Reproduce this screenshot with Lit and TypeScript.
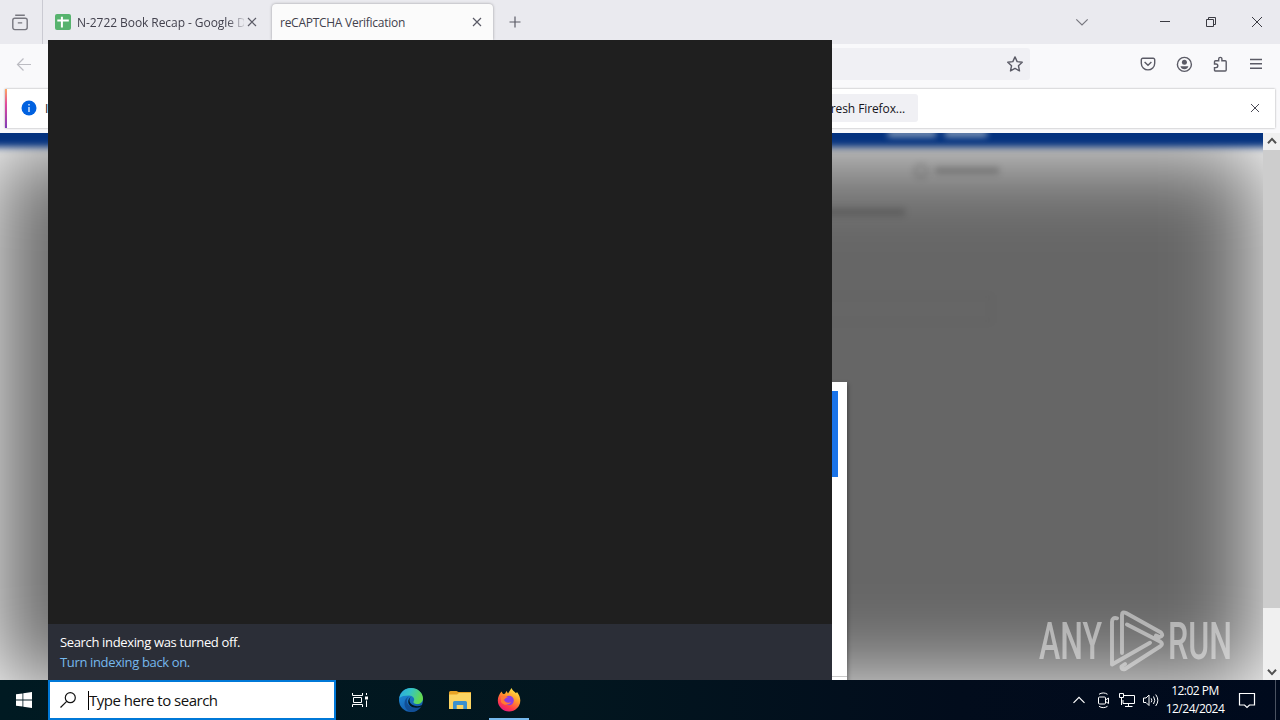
import { LitElement, html, css, svg } from 'lit';
import { customElement, property } from 'lit/decorators.js';

const paths: Record<string, unknown> = {
  view: svg`<path d="M3.2 .3h9.6M5.8 7.9h4.4"/><rect x=".8" y="3.2" width="14.4" height="11.4" rx="2"/>`,
  close: svg`<path d="M4 4l8 8M12 4l-8 8"/>`,
  bigclose: svg`<path d="M3 3l10 10M13 3L3 13"/>`,
  plus: svg`<path d="M8 2.5v11M2.5 8h11"/>`,
  chevron: svg`<path d="M2.3 5.3L8 11l5.7-5.7"/>`,
  min: svg`<path d="M3 7.5h10"/>`,
  restore: svg`<path d="M3.5 5.5h7v7h-7zM5.5 5.5v-2h7v7h-2"/>`,
  back: svg`<path d="M15 8.5H1.5M7.5 2.5l-6 6 6 6"/>`,
  star: svg`<path d="M8 .9l2.15 4.75 5.1.6-3.8 3.5 1.05 5.15L8 12.4l-4.5 2.5 1.05-5.15-3.8-3.5 5.1-.6z" stroke-linejoin="round"/>`,
  pocket: svg`<path d="M2.8 2.3h10.4a1.5 1.5 0 0 1 1.5 1.5v3.4a6.7 6.7 0 0 1-13.4 0V3.8a1.5 1.5 0 0 1 1.5-1.5zM4.6 6l3.4 3.2L11.4 6"/>`,
  account: svg`<circle cx="8.4" cy="8.4" r="7"/><circle cx="8.4" cy="6.2" r="2.5" fill="currentColor" stroke="none"/><path d="M4.4 10.2h8c-.5 2-2 3-4 3s-3.5-1-4-3z" fill="currentColor" stroke="none"/>`,
  puzzle: svg`<path d="M2.5 7.3V5.8a1 1 0 0 1 1-1h3.2V3a1.6 1.6 0 0 1 3.2 0v1.8h3.3a1 1 0 0 1 1 1v8.2a1 1 0 0 1-1 1H3.5a1 1 0 0 1-1-1v-2.4h1.5a1.7 1.7 0 0 0 0-3.6H2.5z"/>`,
  menu: svg`<path d="M2 3.5h12M2 7.7h12M2 12.2h12"/>`,
  up: svg`<path d="M4 9.7l4-4.3 4 4.3"/>`,
  down: svg`<path d="M4 6.3l4 4.3 4-4.3"/>`,
  info: svg`<circle cx="8" cy="8" r="7.5" fill="#0061e0" stroke="none"/><path d="M8 7v5M8 4v1.5" stroke="#fff"/>`,
  sheets: svg`<rect width="16" height="16" rx="2" fill="#57b36e" stroke="none"/><path d="M6.9 2.7v10.8M2.3 6.5h11.5" stroke="#fff" stroke-width="2"/>`,
  start: svg`<path d="M0 2.3l6.5-.9v6.2H0zM7.3 1.3L16 0v7.6H7.3zM0 8.4h6.5v6.2L0 13.7zM7.3 8.4H16V16l-8.7-1.2z" fill="#fff" stroke="none"/>`,
  search: svg`<circle cx="10.3" cy="5.7" r="5"/><path d="M6.7 9.3L.5 15.5"/>`,
  taskview: svg`<path d="M.5 1v2.5h10V1M.5 15v-2.5h10V15M1.5 5.5h8v5h-8zM14.5 1v2M14.5 8.5V15"/><path d="M13 4.5h3v3h-3z" fill="#fff" stroke="none"/>`,
  tray: svg`<path d="M2.5 10.8L8 5.3l5.5 5.5"/>`,
  camera: svg`<rect x="3.5" y="5" width="7" height="7" rx="1"/><path d="M10.5 8l3-2v5.5l-3-2M4 2.3c2.5-1.8 6-1.8 8.5 0M4 14.3c2.5 1.8 6 1.8 8.5 0"/>`,
  network: svg`<path d="M5 3.5h10.5v8H4V8M9.5 11.5v3M6 14.5h7.5M.5 1.5h4v4h-4zM2.5 5.5v7.5"/>`,
  volume: svg`<path d="M.5 6v4.5H3l3 3V3L3 6zM8.2 6.3q1.3 2 0 4M10.5 4.5q2.6 3.8 0 7.5M12.7 2.5q4.3 5.7 0 11.5"/>`,
  notice: svg`<path d="M.5 1.5h15v11.5H10.5l-2.5 2.5-2.5-2.5H.5z"/>`,
};

@customElement('ui-icon')
export class UiIcon extends LitElement {
  static styles = css`
    :host { display: block; flex: none; width: 16px; height: 16px; }
    svg { display: block; width: 100%; height: 100%; overflow: visible; }
  `;

  @property() name = '';
  @property({ type: Number }) weight = 1.2;

  render() {
    return html`<svg viewBox="0 0 16 16" fill="none" stroke="currentColor" stroke-width=${this.weight}>${paths[this.name]}</svg>`;
  }
}

@customElement('browser-window')
export class BrowserWindow extends LitElement {
  static styles = css`
    :host { display: flex; flex-direction: column; height: 680px; background: #f9f9fb; color: #5b5b66; }
    .tabs { display: flex; height: 44px; background: #eaeaef; flex: none; }
    .view { border-right: 1px solid #cacad2; padding: 15px 0 0 12px; box-sizing: border-box; height: 44px; width: 43px; color: #77777f; }
    .tab { box-sizing: border-box; display: flex; align-items: center; height: 36px; margin-top: 4px; color: #42414d; font-size: 12px; }
    .first { width: 229px; padding: 0 12px; }
    .first .label { width: 167px; margin-left: 6px; letter-spacing: -0.06px; -webkit-mask-image: linear-gradient(90deg, #000 150px, transparent 170px); }
    .label { overflow: hidden; white-space: nowrap; line-height: 18px; padding-top: 2px; }
    .active { width: 221px; padding: 0 8px; background: #fbfbfb; border-radius: 4px 4px 0 0; box-shadow: 0 0 3px rgba(0, 0, 0, .35); justify-content: space-between; }
    .active .label { letter-spacing: -0.27px; }
    .tab ui-icon:last-child { color: #5b5b66; }
    .new { margin: 14px 0 0 14px; }
    .controls { display: flex; margin: 14px 15px 0 auto; gap: 30px; color: #3b3b42; }
    .all { margin-right: 37px; color: #77777f; }
    .nav { display: flex; height: 44px; align-items: center; flex: none; box-sizing: border-box; padding: 0 16px 4px; }
    .back { color: #bcbcc2; }
    .url { box-sizing: border-box; height: 32px; width: 830px; margin: 0 110px 0 168px; padding: 8px 7px; background: #f0f0f4; display: flex; justify-content: flex-end; border-radius: 0 3px 3px 0; }
    .tools { display: flex; gap: 20px; }
    .notice { box-sizing: border-box; display: flex; align-items: center; flex: none; height: 39px; margin: 1px 5px 5px; border-left: 2px solid; border-image: linear-gradient(#ffad5e, #e0489e 40%, #7b3cb8) 1; background: #fff; box-shadow: 0 0 2px rgba(0, 0, 0, .35); padding: 0 12px 1px 14px; font-size: 12px; color: #15141a; }
    .message { margin-left: 8px; width: 747px; }
    .refresh { width: 126px; height: 28px; box-sizing: border-box; padding-right: 13px; border-radius: 3px; background: #f0f0f4; text-align: right; line-height: 29px; letter-spacing: -0.1px; white-space: nowrap; }
    .dismiss { margin-left: auto; color: #4a4a55; }
    .body { display: flex; flex: 1; min-height: 0; }
    .page { position: relative; flex: 1; overflow: hidden; background: #fff; }
    .shade { position: absolute; inset: 17px 3px -6px -3px; background: rgba(0, 0, 0, .6); filter: blur(44px); }
    .banner { position: absolute; inset: -14px -12px auto -12px; height: 28px; background: #04327f; filter: blur(3.5px); }
    .ghost { position: absolute; filter: blur(3px); }
    .crumb { left: 888px; top: -3px; width: 48px; height: 7px; background: #7f97b8; }
    .crumb2 { left: 945px; width: 42px; }
    .dot { left: 914px; top: 31px; width: 10px; height: 10px; border: 2px solid rgba(0, 0, 0, .25); border-radius: 50%; }
    .line { left: 935px; top: 34px; width: 64px; height: 7px; background: rgba(0, 0, 0, .2); }
    .line2 { left: 820px; top: 75px; width: 85px; height: 8px; background: rgba(0, 0, 0, .15); }
    .field { left: 700px; top: 162px; width: 288px; height: 24px; border: 2px solid rgba(0, 0, 0, .035); }
    .dialog { position: absolute; right: 416px; top: 249px; width: 400px; height: 310px; box-sizing: border-box; background: #fff; padding: 9px; box-shadow: 1px 2px 4px rgba(0, 0, 0, .35); }
    .challenge { height: 86px; background: #1a73e8; }
    .rule { height: 1px; margin: 199px -9px 0; background: #c9c9c9; }
    .scroll { width: 17px; background: #f0f0f0; display: flex; flex-direction: column; color: #505050; }
    .scroll ui-icon { margin: 0 .5px; height: 17px; }
    .thumb { height: 458px; background: #cdcdcd; }
    .scroll ui-icon:last-child { margin-top: auto; }
    .mark { position: absolute; left: 1028px; top: 474px; width: 214px; height: 68px; opacity: .55; }
    .mark text { font-family: Roboto, "Liberation Sans", sans-serif; font-size: 52px; font-weight: 500; fill: #ececec; }
    .mark path { fill: none; stroke: #ececec; stroke-width: 3.9; stroke-linejoin: round; stroke-linecap: round; }
  `;

  render() {
    return html`
      <div class="tabs">
        <div class="view"><ui-icon name="view" weight="1.4"></ui-icon></div>
        <div class="tab first">
          <ui-icon name="sheets"></ui-icon>
          <span class="label">N-2722 Book Recap - Google Dr</span>
          <ui-icon name="close"></ui-icon>
        </div>
        <div class="tab active">
          <span class="label">reCAPTCHA Verification</span>
          <ui-icon name="close"></ui-icon>
        </div>
        <ui-icon class="new" name="plus"></ui-icon>
        <div class="controls">
          <ui-icon class="all" name="chevron"></ui-icon>
          <ui-icon name="min" weight="1"></ui-icon>
          <ui-icon name="restore" weight="1"></ui-icon>
          <ui-icon name="bigclose" weight="1"></ui-icon>
        </div>
      </div>
      <div class="nav">
        <ui-icon class="back" name="back"></ui-icon>
        <div class="url"><ui-icon name="star" weight="1.4"></ui-icon></div>
        <div class="tools">
          <ui-icon name="pocket" weight="1.4"></ui-icon>
          <ui-icon name="account" weight="1.4"></ui-icon>
          <ui-icon name="puzzle" weight="1.4"></ui-icon>
          <ui-icon name="menu" weight="1.4"></ui-icon>
        </div>
      </div>
      <div class="notice">
        <ui-icon name="info"></ui-icon>
        <span class="message">I</span>
        <span class="refresh">Refresh Firefox...</span>
        <ui-icon class="dismiss" name="close" weight="1"></ui-icon>
      </div>
      <div class="body">
        <div class="page">
          <div class="shade"></div>
          <div class="banner"></div>
          <div class="ghost crumb"></div>
          <div class="ghost crumb crumb2"></div>
          <div class="ghost dot"></div>
          <div class="ghost line"></div>
          <div class="ghost line2"></div>
          <div class="ghost field"></div>
          <div class="dialog">
            <div class="challenge"></div>
            <div class="rule"></div>
          </div>
          <svg class="mark" viewBox="-10 0 214 68">
            <text x="1" y="52" textLength="63" lengthAdjust="spacingAndGlyphs">ANY</text>
            <text x="130" y="52" textLength="64" lengthAdjust="spacingAndGlyphs">RUN</text>
            <path d="M79 11.3Q74 10 74 15V57.5L112 35.7M84 46V8Q84 4 88 6L123 25.5Q126 29 121.5 30L118 28.5M89 17.5L122 34.5Q126 37 122 39.5L87 62Q83 63 83.5 59.5L87 57"/>
          </svg>
        </div>
        <div class="scroll">
          <ui-icon name="up" weight="2"></ui-icon>
          <div class="thumb"></div>
          <ui-icon name="down" weight="2"></ui-icon>
        </div>
      </div>
    `;
  }
}

@customElement('task-bar')
export class TaskBar extends LitElement {
  static styles = css`
    :host { display: flex; height: 40px; align-items: center; background: linear-gradient(90deg, #001a22, #02161f 45%, #020c1c 75%, #000a1d); color: #fff; }
    .start { margin: 0 16px; }
    .search { box-sizing: border-box; width: 288px; height: 40px; display: flex; align-items: center; border: 2px solid #0078d7; background: #fff; color: #111; padding-left: 10px; }
    .caret { width: 1px; height: 19px; margin-left: 12px; background: #000; }
    .hint { font-size: 15px; letter-spacing: -0.5px; white-space: nowrap; }
    .apps { display: flex; align-items: center; height: 40px; }
    .app { display: flex; align-items: center; justify-content: center; width: 47px; height: 40px; box-sizing: border-box; }
    .app svg { width: 24px; height: 24px; display: block; }
    .wide { width: 55px; }
    .files { width: 43px; }
    .running { width: 40px; margin-left: 8px; border-bottom: 2px solid #76b9ed; padding-top: 1px; }
    .status { display: flex; align-items: center; margin-left: auto; height: 40px; }
    .status ui-icon { margin-right: 8px; }
    .clock { font-size: 12px; line-height: 18px; text-align: center; width: 64px; margin-left: -4px; letter-spacing: -0.5px; white-space: nowrap; }
    .status .notices { margin: 0 20px 0 12px; }
    .peek { width: 4px; height: 40px; border-left: 1px solid #4a5261; }
  `;

  render() {
    return html`
      <ui-icon class="start" name="start"></ui-icon>
      <div class="search">
        <ui-icon name="search"></ui-icon>
        <span class="caret"></span>
        <span class="hint">Type here to search</span>
      </div>
      <div class="apps">
        <div class="app"><ui-icon name="taskview" weight="1"></ui-icon></div>
        <div class="app wide">
          <svg viewBox="0 0 24 24">
            <defs>
              <linearGradient id="g1" x1="0" y1="0" x2="1" y2=".3"><stop offset="0" stop-color="#2aa7e2"/><stop offset=".5" stop-color="#35c4c4"/><stop offset="1" stop-color="#63d950"/></linearGradient>
              <linearGradient id="g2" x1="0" y1="0" x2=".6" y2="1"><stop offset="0" stop-color="#1f95df"/><stop offset="1" stop-color="#1356a8"/></linearGradient>
            </defs>
            <circle cx="12" cy="12" r="12" fill="url(#g2)"/>
            <path d="M.3 10C1.5 4 6 0 12 0c7 0 12 5 12 10.5 0 3.5-2.6 5.5-5.7 5.5-3 0-4.5-1.2-3.6-2.7 1.5-2.5-.6-5.8-4.7-5.8C5.500 7.500 2 8.300.3 10z" fill="url(#g1)"/>
            <path d="M10 8.5c-3 2-3 7 .5 9.5 3.5 2.5 9 2 12-.7C20.5 21.5 17 24 12.5 24 8 23 5.5 19.5 5.5 15.5 5.5 12 7.5 9.3 10 8.5z" fill="#124f96"/>
            <path d="M12 9.3c-2 1.2-2.3 5.200 1.200 7.500 3 1.900 6.800 1.700 10 .1l-.8 1.600c-4 2-9 1.500-11.500-1-2.600-2.700-2-7 1.100-8.200z" fill="#02161f"/>
          </svg>
        </div>
        <div class="app files">
          <svg viewBox="0 0 24 24">
            <path d="M1 4.5a1.5 1.5 0 0 1 1.5-1.5h6l2 1H23v15H1z" fill="#e8a325"/>
            <path d="M1 6.5h8l2-1.5h12v16H1z" fill="#fcd462"/>
            <path d="M5 21v-6.5a1.5 1.5 0 0 1 1.5-1.5h11a1.5 1.5 0 0 1 1.5 1.5V21h-3.7v-4H8.7v4z" fill="#3b91cf"/>
          </svg>
        </div>
        <div class="app running">
          <svg viewBox="0 0 24 24">
            <defs>
              <linearGradient id="g3" x1=".8" y1="0" x2=".25" y2="1"><stop offset="0" stop-color="#fff04a"/><stop offset=".4" stop-color="#ff9a2b"/><stop offset=".75" stop-color="#ff3c49"/><stop offset="1" stop-color="#e31587"/></linearGradient>
            </defs>
            <path d="M4.5 3.5L6 6l2-.3L9.5 3l1.5 2.5L14.5 0c1 2.5 3 3.6 4.5 5.3L20 4c2 2.5 3.3 5.5 3.3 8.5A11.2 11.2 0 0 1 12 23.5 11.2 11.2 0 0 1 .8 12.5c0-3.5 1.5-6.5 3.700-9z" fill="url(#g3)"/>
            <circle cx="12" cy="12.5" r="4.8" fill="#8a3de0"/>
            <path d="M4 9c3-2 5-1 7 .2-2 .3-2.500 1.500-4.500 2.300C8 14.500 11 15.500 14 14c-2 4-8 3.500-10 0z" fill="#ff7a35"/>
          </svg>
        </div>
      </div>
      <div class="status">
        <ui-icon name="tray"></ui-icon>
        <ui-icon name="camera" weight="1"></ui-icon>
        <ui-icon name="network" weight="1"></ui-icon>
        <ui-icon name="volume" weight="1"></ui-icon>
        <div class="clock">12:02 PM<br>12/24/2024</div>
        <ui-icon class="notices" name="notice"></ui-icon>
        <div class="peek"></div>
      </div>
    `;
  }
}

@customElement('app-root')
export class AppRoot extends LitElement {
  static styles = css`
    :host { display: block; position: relative; width: 1280px; height: 720px; overflow: hidden; font-family: "Open Sans", "Noto Sans", sans-serif; }
    .panel { position: absolute; left: 48px; top: 40px; width: 784px; height: 640px; display: flex; flex-direction: column; justify-content: flex-end; background: #1f1f1f; }
    .footer { box-sizing: border-box; height: 56px; padding: 8px 12px; background: #2b2e37; color: #fff; font-size: 13px; line-height: 20px; letter-spacing: -0.35px; }
    .link { color: #76b9ed; }
  `;

  render() {
    return html`
      <browser-window></browser-window>
      <task-bar></task-bar>
      <div class="panel">
        <div class="footer">
          <div>Search indexing was turned off.</div>
          <div class="link">Turn indexing back on.</div>
        </div>
      </div>
    `;
  }
}
